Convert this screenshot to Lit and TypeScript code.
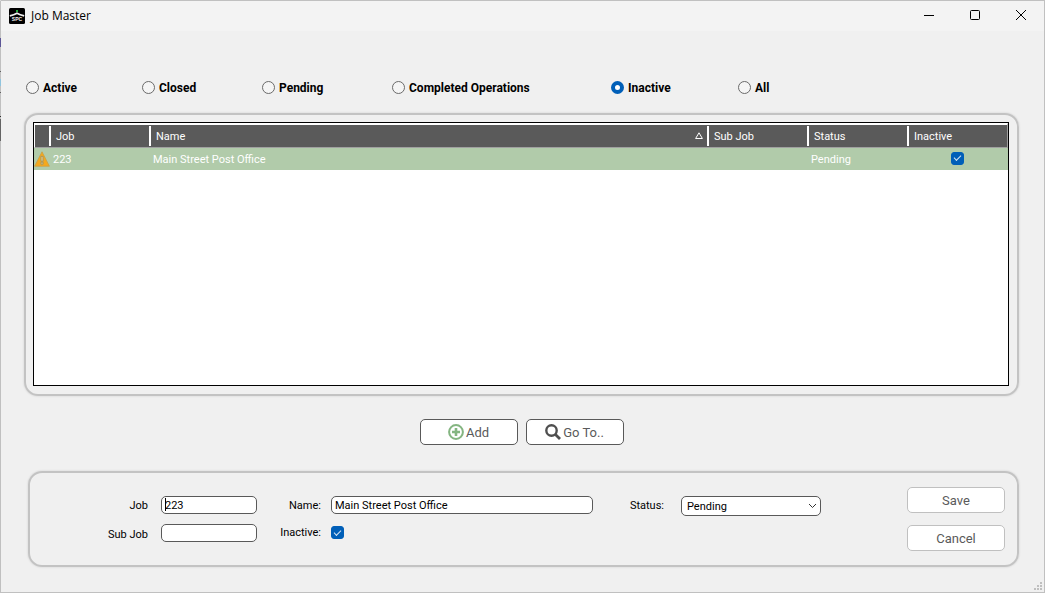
import { LitElement, html, css, svg } from "lit";
import { customElement, state } from "lit/decorators.js";

interface Job {
  job: string;
  name: string;
  subJob: string;
  status: string;
  inactive: boolean;
}

const FILTERS = ["Active", "Closed", "Pending", "Completed Operations", "Inactive", "All"];

const JOBS: Job[] = [
  { job: "223", name: "Main Street Post Office", subJob: "", status: "Pending", inactive: true },
];

const logo = svg`<svg class="logo" viewBox="0 0 16 16" width="16" height="16" aria-hidden="true">
  <rect width="16" height="16" rx="1.5" fill="#000"/>
  <path d="M.8 7.8 Q5 6.8 8 5.2 Q11 6.8 15.2 7.8" fill="none" stroke="#f0f0f0" stroke-width="1.7"/>
  <rect x="7" y="2" width="2" height="2" fill="#1fae3c"/>
  <text x="8" y="13" text-anchor="middle" font-family="Liberation Sans, sans-serif" font-size="5" font-weight="700" fill="#eee">SPC</text>
</svg>`;

const warning = svg`<svg class="warning" viewBox="0 0 16 16" width="16" height="16" role="img" aria-label="Warning">
  <path d="M8 .8 L15.4 15.2 H.6 Z" fill="#f5a81c" stroke="#c99f45" stroke-width=".8" stroke-linejoin="round"/>
  <path d="M6.9 5.4 h2.2 v4.8 h-2.2 Z M6.9 11.2 h2.2 v2 h-2.2 Z" fill="#e8c878" stroke="#98906a" stroke-width=".8"/>
</svg>`;

const plus = svg`<svg viewBox="0 0 16 16" width="16" height="16" aria-hidden="true">
  <circle cx="8" cy="8" r="6.9" fill="none" stroke="#84b581" stroke-width="2"/>
  <path d="M8 4 V12 M4 8 H12" stroke="#84b581" stroke-width="2.6"/>
</svg>`;

const magnifier = svg`<svg viewBox="0 0 16 16" width="16" height="16" aria-hidden="true">
  <circle cx="6.5" cy="6.5" r="5.2" fill="none" stroke="#4f4f4f" stroke-width="2.4"/>
  <path d="M10.2 10.2 L15 15" stroke="#4f4f4f" stroke-width="2.8"/>
</svg>`;

@customElement("app-root")
export class AppRoot extends LitElement {
  @state() private filter = "Inactive";

  static styles = css`
    :host {
      display: block;
      font: 11px/16px Roboto, "Liberation Sans", sans-serif;
      color: #000;
    }
    * { box-sizing: border-box; }
    .window {
      position: relative;
      min-height: 100vh;
      display: flex;
      flex-direction: column;
      border: 1px solid #c0c0c0;
      border-left-color: transparent;
      background:
        linear-gradient(
          #c0c0c0 38px, #5c5596 38px 47px, #c0c0c0 47px 71px, #606060 71px 72px,
          #c0c0c0 72px 79px, #8fc4de 79px 86px, #c0c0c0 86px 92px, #606060 92px 93px,
          #c0c0c0 93px 116px, #303030 116px 117px, #c0c0c0 117px 119px, #646464 119px 141px, #c0c0c0 141px
        ) border-box left top / 1px 100% no-repeat,
        #f0f0f0;
    }
    .titlebar {
      height: 30px;
      display: flex;
      align-items: center;
      padding-left: 8px;
      gap: 6px;
      background: #f3f3f3;
    }
    .title {
      flex: 1;
      margin: 0;
      font: 400 12px/16px "Open Sans", "Noto Sans", sans-serif;
    }
    .caption-buttons { display: flex; }
    .caption-button {
      width: 46px;
      height: 30px;
      padding: 0 0 2px;
      border: 0;
      background: none;
      display: grid;
      place-items: center;
    }
    .filters {
      margin: 49px 25px 0;
      padding: 0;
      border: 0;
      display: grid;
      grid-template-columns: 116fr 120fr 130fr 219fr 127fr 281fr;
    }
    .filter {
      display: flex;
      align-items: flex-start;
      gap: 4px;
      font-weight: 700;
      font-size: 12px;
      white-space: nowrap;
    }
    .radio {
      appearance: none;
      width: 13px;
      height: 13px;
      margin: 1px 0 0;
      border: 1px solid #6a6a6a;
      border-radius: 50%;
      background: #f5f5f5;
    }
    .radio:checked {
      border: 4px solid #005fb8;
      background: #fff;
    }
    .panel {
      border: 2px solid #c3c3c3;
      border-radius: 14px;
      box-shadow: 0 0 2px #c8c8c8;
    }
    .list {
      flex: 1;
      display: flex;
      margin: 17px 25px 0 23px;
      padding: 7px 8px 8px 7px;
    }
    .grid {
      flex: 1;
      border: 1px solid #000;
      background: #fff;
    }
    .table {
      width: 100%;
      table-layout: fixed;
      border-collapse: separate;
      border-spacing: 0;
    }
    .col-flag { width: 17px; }
    .col-fixed { width: 100px; }
    .col-last { width: 99px; }
    .th {
      height: 25px;
      padding: 1px 6px 0 5px;
      border-top: 2px solid #fff;
      border-bottom: 1px solid #a0a0a0;
      background: linear-gradient(#fff, #fff) right center / 2px 20px no-repeat, #5a5a5a;
      color: #fff;
      font-weight: 400;
      text-align: left;
    }
    .th:first-child { border-left: 1px solid #fff; }
    .th:last-child {
      border-right: 1px solid #a0a0a0;
      background: #5a5a5a;
    }
    .th-content {
      display: flex;
      align-items: center;
      justify-content: space-between;
    }
    .td {
      height: 22px;
      padding: 2px 2px 0;
      background: #b1cbaa;
      color: #fff;
    }
    .td-flag { padding: 0; }
    .warning { display: block; }
    .td-check {
      padding: 0 4px 2px 2px;
      text-align: center;
      line-height: 0;
    }
    .check {
      appearance: none;
      width: 13px;
      height: 13px;
      margin: 0;
      display: inline-grid;
      place-items: center;
      vertical-align: middle;
      border: 1px solid #6a6a6a;
      border-radius: 3px;
      background: #fff;
    }
    .check:checked {
      border-color: #005fb8;
      background: #005fb8;
    }
    .check:checked::before {
      content: "";
      width: 6px;
      height: 3px;
      border: solid #d5e5f4;
      border-width: 0 0 1px 1px;
      transform: translateY(-1px) rotate(-45deg);
    }
    .toolbar {
      display: flex;
      justify-content: center;
      gap: 8px;
      margin: 23px 2px 26px 0;
    }
    .button {
      width: 98px;
      height: 26px;
      padding: 0;
      display: flex;
      align-items: center;
      justify-content: center;
      gap: 2px;
      border: 1px solid #595959;
      border-radius: 5px;
      background: #fff;
      color: #5a5a5a;
      font: 400 13px/16px Roboto, "Liberation Sans", sans-serif;
    }
    .button-text { padding-top: 2px; }
    .button-quiet { border-color: #c0c0c0; }
    .editor {
      display: grid;
      grid-template-columns: 119px 96px 74px minmax(96px, 262px) 88px 140px 1fr auto;
      margin: 0 25px 25px 27px;
      padding: 14px 12px;
    }
    .labels, .inputs, .actions {
      display: flex;
      flex-direction: column;
    }
    .labels {
      gap: 11px;
      padding: 11px 10px 0 0;
      text-align: right;
    }
    .labels-job {
      gap: 13px;
      padding-right: 13px;
    }
    .labels-status { padding-right: 17px; }
    .inputs {
      gap: 10px;
      padding-top: 9px;
      align-items: start;
    }
    .inputs-name { gap: 12px; }
    .field {
      position: relative;
      display: flex;
      width: 100%;
    }
    .input, .select {
      width: 100%;
      height: 18px;
      padding: 0 3px;
      border: 1px solid #595959;
      border-radius: 5px;
      outline: 0;
      background: #fff;
      color: #000;
      font: inherit;
    }
    .select {
      height: 20px;
      padding: 1px 5px 0;
      appearance: none;
    }
    .caret {
      position: absolute;
      left: 4px;
      top: 2px;
      width: 1px;
      height: 13px;
      background: #000;
    }
    .chevron {
      position: absolute;
      right: 4px;
      top: 6px;
      pointer-events: none;
    }
    .actions { gap: 12px; }
    .grip {
      position: absolute;
      right: 2px;
      bottom: 2px;
    }
  `;

  private renderRow(job: Job) {
    return html`<tr>
      <td class="td td-flag">${warning}</td>
      <td class="td">${job.job}</td>
      <td class="td">${job.name}</td>
      <td class="td">${job.subJob}</td>
      <td class="td">${job.status}</td>
      <td class="td td-check"><input class="check" type="checkbox" aria-label="Inactive" .checked=${job.inactive} /></td>
    </tr>`;
  }

  render() {
    return html`
      <main class="window">
        <header class="titlebar">
          ${logo}
          <h1 class="title">Job Master</h1>
          <div class="caption-buttons">
            <button class="caption-button" aria-label="Minimize">
              <svg width="10" height="11" viewBox="0 0 10 11"><path d="M0 5.5H10" stroke="#000" fill="none" /></svg>
            </button>
            <button class="caption-button" aria-label="Maximize">
              <svg width="10" height="10" viewBox="0 0 10 10"><rect x=".5" y=".5" width="9" height="9" rx="1" stroke="#000" fill="none" /></svg>
            </button>
            <button class="caption-button" aria-label="Close">
              <svg width="10" height="10" viewBox="0 0 10 10"><path d="M0 0L10 10M10 0L0 10" stroke="#000" fill="none" /></svg>
            </button>
          </div>
        </header>

        <fieldset class="filters" aria-label="Job filter">
          ${FILTERS.map(
            (name) => html`<label class="filter">
              <input class="radio" type="radio" name="filter" .checked=${name === this.filter}
                @change=${() => (this.filter = name)} />${name}
            </label>`
          )}
        </fieldset>

        <section class="panel list">
          <div class="grid">
            <table class="table">
              <colgroup>
                <col class="col-flag" /><col class="col-fixed" /><col />
                <col class="col-fixed" /><col class="col-fixed" /><col class="col-last" />
              </colgroup>
              <thead>
                <tr>
                  <th class="th"></th>
                  <th class="th">Job</th>
                  <th class="th"><div class="th-content">Name
                    <svg width="8" height="9" viewBox="0 0 8 9" aria-hidden="true"><path d="M4 .8L7.4 6.5H.6Z" fill="none" stroke="#fff" /></svg></div></th>
                  <th class="th">Sub Job</th>
                  <th class="th">Status</th>
                  <th class="th">Inactive</th>
                </tr>
              </thead>
              <tbody>${JOBS.map((job) => this.renderRow(job))}</tbody>
            </table>
          </div>
        </section>

        <div class="toolbar">
          <button class="button">${plus}<span class="button-text">Add</span></button>
          <button class="button">${magnifier}<span class="button-text">Go To..</span></button>
        </div>

        <form class="panel editor" @submit=${(e: Event) => e.preventDefault()}>
          <div class="labels labels-job">
            <label for="job">Job</label>
            <label for="subjob">Sub Job</label>
          </div>
          <div class="inputs">
            <div class="field"><input class="input" id="job" type="text" value="223" /><span class="caret"></span></div>
            <div class="field"><input class="input" id="subjob" type="text" /></div>
          </div>
          <div class="labels">
            <label for="name">Name:</label>
            <label for="inactive">Inactive:</label>
          </div>
          <div class="inputs inputs-name">
            <div class="field"><input class="input" id="name" type="text" value="Main Street Post Office" /></div>
            <input class="check" id="inactive" type="checkbox" checked />
          </div>
          <div class="labels labels-status">
            <label for="status">Status:</label>
          </div>
          <div class="inputs">
            <div class="field">
              <select class="select" id="status">
                <option>Pending</option>
                <option>Active</option>
                <option>Closed</option>
              </select>
              <svg class="chevron" width="9" height="8" viewBox="0 0 9 8" aria-hidden="true"><path d="M1 2L4.5 5.5L8 2" fill="none" stroke="#333" /></svg>
            </div>
          </div>
          <span></span>
          <div class="actions">
            <button class="button button-quiet" type="submit"><span class="button-text">Save</span></button>
            <button class="button button-quiet" type="button"><span class="button-text">Cancel</span></button>
          </div>
        </form>

        <svg class="grip" width="8" height="8" viewBox="0 0 8 8" aria-hidden="true">
          <path d="M6 0h2v2h-2zM6 3h2v2h-2zM3 3h2v2h-2zM6 6h2v2h-2zM3 6h2v2h-2zM0 6h2v2h-2z" fill="#bfbfbf" />
        </svg>
      </main>
    `;
  }
}
